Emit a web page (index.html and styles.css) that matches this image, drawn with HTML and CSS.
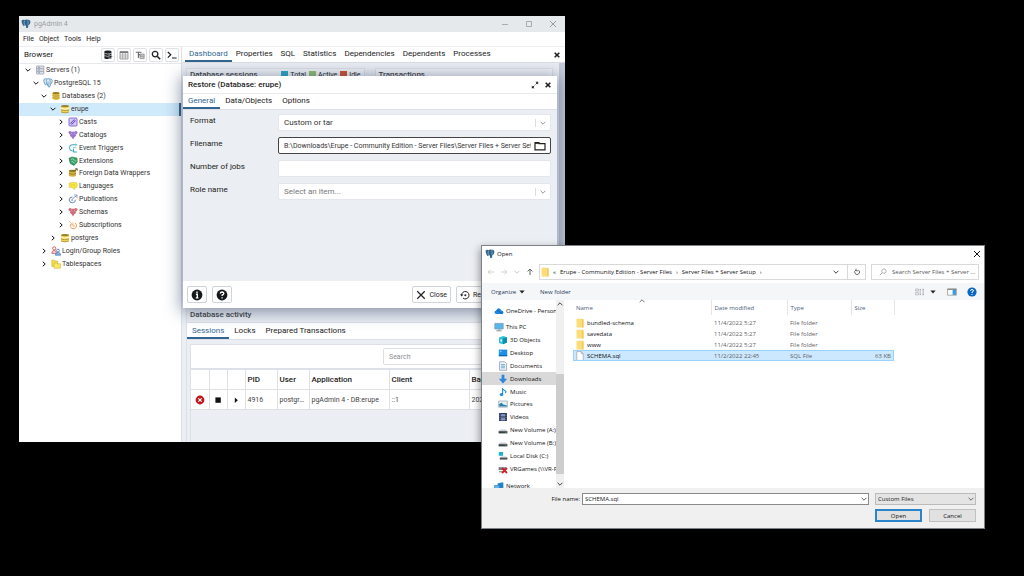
FILE: index.html
```html
<!DOCTYPE html>
<html lang="en">
<head>
    <meta charset="UTF-8">
    <meta name="viewport" content="width=device-width, initial-scale=1.0">
    <title>pgAdmin 4</title>
    <link rel="stylesheet" href="styles.css">
</head>
<body>
    <!-- icon sprite -->
    <svg class="sprite" width="0" height="0" aria-hidden="true">
        <symbol id="i-right" viewBox="0 0 8 8"><path d="M2.8 1.8 5.2 4 2.8 6.2" fill="none" stroke="currentColor"/></symbol>
        <symbol id="i-down" viewBox="0 0 8 8"><path d="M1.6 2.8 4 5.2 6.4 2.8" fill="none" stroke="currentColor"/></symbol>
        <symbol id="i-up" viewBox="0 0 8 8"><path d="M1.6 5.2 4 2.8 6.4 5.2" fill="none" stroke="currentColor"/></symbol>
        <symbol id="i-x" viewBox="0 0 8 8"><path d="M1 1 7 7M7 1 1 7" fill="none" stroke="currentColor"/></symbol>
        <symbol id="i-bx" viewBox="0 0 8 8"><path d="M1.7 1.7 6.3 6.3M6.3 1.7 1.7 6.3" fill="none" stroke="currentColor" stroke-width="1.6"/></symbol>
        <symbol id="i-min" viewBox="0 0 8 8"><path d="M1 4.5H7" stroke="currentColor" stroke-width=".8"/></symbol>
        <symbol id="i-max" viewBox="0 0 8 8"><path d="M1.5 1.5H6.5V6.5H1.5Z" fill="none" stroke="currentColor" stroke-width=".8"/></symbol>
        <symbol id="i-elephant" viewBox="0 0 10 10"><path d="M.6 1.6Q2 .2 3.8 1Q5 .3 6.6.8Q9 .4 9.4 2.4Q9.5 4.4 8 6H7.4L7 8.6Q6 9.8 5.2 8.8L4.8 6.2L3.4 6.6Q2.4 7.6 1.8 6Q.4 3.6.6 1.6Z" fill="#31648c"/><path d="M3.5 1.6Q2.8 3.6 3.4 6M6.6 1.4Q7.8 3 6.8 5.8" fill="none" stroke="#c4d8e6" stroke-width=".5"/></symbol>
        <symbol id="i-pg" viewBox="0 0 10 10"><path d="M.8 1.6Q2.2.3 3.9 1Q5 .4 6.6.9Q8.8.6 9.2 2.4Q9.3 4.4 8 6H7.4L7 8.6Q6 9.6 5.2 8.6L4.8 6.2L3.4 6.6Q2.4 7.4 1.9 6Q.6 3.6.8 1.6Z" fill="#e3f0f8" stroke="#4b8ab8" stroke-width=".8"/><path d="M3.6 1.4Q2.9 3.6 3.5 6M6.6 1.4Q7.8 3 6.8 5.8M5 3.4V8" fill="none" stroke="#4b8ab8" stroke-width=".7"/></symbol>
        <symbol id="i-server" viewBox="0 0 10 10"><path d="M1.6 1H8.8V9H1.6Z" fill="#dfe3ea" stroke="#9aa2b4" stroke-width=".8"/><path d="M1.6 3.7H8.8M1.6 6.3H8.8" stroke="#8f98a8" stroke-width=".8"/><path d="M3 2.4H5M3 5H5M3 7.7H5" stroke="#697387" stroke-width=".6"/></symbol>
        <symbol id="i-dbs" viewBox="0 0 10 10"><path d="M1.5 2V8Q5 10 8.5 8V2Z" fill="#e0bd45"/><ellipse cx="5" cy="2.1" rx="3.5" ry="1.2" fill="#9a7d1d"/><path d="M1.5 4.5Q5 6 8.5 4.5M1.5 6.6Q5 8.1 8.5 6.6" fill="none" stroke="#a88a24" stroke-width=".6"/></symbol>
        <symbol id="i-db" viewBox="0 0 10 10"><path d="M1 2V8Q5 10 9 8V2Z" fill="#f5d95f"/><ellipse cx="5" cy="2.1" rx="4" ry="1.2" fill="#9a8327"/><path d="M1 4.4Q5 5.8 9 4.4" fill="none" stroke="#fffbe0" stroke-width=".9"/><path d="M1 6Q5 7.6 9 6M1 8Q5 9.8 9 8" fill="none" stroke="#a88a24" stroke-width=".8"/></symbol>
        <symbol id="i-casts" viewBox="0 0 10 10"><rect x="1" y="1" width="8" height="8" rx="1" fill="#d8ccf6" stroke="#7a5fd0" stroke-width=".9"/><path d="M3 7 7 3" stroke="#6a4cc6" stroke-width="2.4"/><path d="M3.4 6.6 6.6 3.4" stroke="#e7dffb" stroke-width=".8"/></symbol>
        <symbol id="i-heart" viewBox="0 0 10 10"><circle cx="2.2" cy="2.6" r="1.7"/><circle cx="7.8" cy="2.6" r="1.7"/><circle cx="5" cy="3" r="1.6"/><path d="M1.4 4.6H8.6L6.6 6.8 5 9.4 3.4 6.8Z"/><circle cx="3.6" cy="5.4" r="1.4"/><circle cx="6.4" cy="5.4" r="1.4"/></symbol>
        <symbol id="i-trigger" viewBox="0 0 10 10"><path d="M8.6 1.8H4Q1.4 1.8 1.4 4.6Q1.4 8 4.6 8" fill="none" stroke="#36a6ba" stroke-width="1"/><path d="M7.2.8 9.2 1.8 7.4 3.2M4.8 4.5H8.6" fill="none" stroke="#76cbd8" stroke-width=".8"/><path d="M5.4 5.6 5.4 9 8.8 9" fill="none" stroke="#2688c7" stroke-width=".9"/></symbol>
        <symbol id="i-ext" viewBox="0 0 10 10"><path d="M1 2.4 4 1 9 2.2 9.2 6 6 9.4 2.4 7.4Z" fill="#3aa46b" stroke="#1d7446" stroke-width=".7"/><path d="M3 3.4Q5 2 6.2 3.8T8.4 5M3.4 5.6Q5 4.6 6.4 7.4" fill="none" stroke="#b9e6cb" stroke-width=".7"/></symbol>
        <symbol id="i-fdw" viewBox="0 0 10 10"><path d="M1 2.6V8Q4.4 9.6 8 8V2.6Z" fill="#d3b041"/><ellipse cx="4.5" cy="2.8" rx="3.5" ry="1.1" fill="#8f7420"/><path d="M1 5.6Q4.5 7 8 5.6" fill="none" stroke="#8f7420" stroke-width=".7"/><path d="M6.2 3 9.2.8M7.2.8H9.2V2.8" fill="none" stroke="#57480f" stroke-width=".8"/></symbol>
        <symbol id="i-lang" viewBox="0 0 10 10"><path d="M1.4 2Q5 .8 8.8 2Q9.6 4.6 8.6 6.4H6.6L6.8 8.6 4 6.6H1.6Q.6 4.4 1.4 2Z" fill="#fbe94a" stroke="#d3bd22" stroke-width=".6"/><path d="M2.6 3.4H7.4M2.6 4.8H7.4" stroke="#e0cb2d" stroke-width=".6"/></symbol>
        <symbol id="i-pub" viewBox="0 0 10 10"><path d="M4.4 3Q1.2 3 1.2 6Q1.4 9 4.6 8.8Q7.6 8.4 7.4 5.8" fill="none" stroke="#6a86bd" stroke-width="1"/><path d="M4 6.2Q4.4 3.8 8.6 1.8M6.2 1H9V3.8" fill="none" stroke="#7b95c8" stroke-width=".9"/><circle cx="4.2" cy="6.2" r="1.1" fill="#a9bce0"/></symbol>
        <symbol id="i-sub" viewBox="0 0 10 10"><path d="M3 3.8Q1.2 6.6 3.6 8.4Q6.4 9.8 8.2 7.4Q9.4 4.6 7.2 3" fill="none" stroke="#eba26c" stroke-width="1"/><path d="M1 1 5 5M5 2.2V5H2.2" fill="none" stroke="#f1b57f" stroke-width=".9"/><circle cx="5.8" cy="6" r="1.2" fill="#f6d0ad"/></symbol>
        <symbol id="i-roles" viewBox="0 0 10 10"><circle cx="3.2" cy="2.4" r="1.6" fill="#fff" stroke="#c6433f" stroke-width=".8"/><path d="M.8 7.4Q.8 4.4 3.2 4.4T5.4 7.4Z" fill="#f6d6d4" stroke="#c6433f" stroke-width=".7"/><circle cx="7" cy="4.6" r="1.4" fill="#fff" stroke="#3d73ba" stroke-width=".8"/><path d="M4.4 9.2Q4.6 6.4 7 6.4T9.6 9.2Z" fill="#8fb8e8" stroke="#3d73ba" stroke-width=".7"/></symbol>
        <symbol id="i-tbs" viewBox="0 0 10 10"><path d="M.8 1.2H3.4L4 2H6.6V7.4H.8Z" fill="#f5dc4e" stroke="#cfb12d" stroke-width=".6"/><path d="M3 4H5.6L6.2 4.8H9.4V9.2H3Z" fill="#fbe768" stroke="#cfb12d" stroke-width=".6"/></symbol>
        <symbol id="i-query" viewBox="0 0 10 10"><path d="M1.4 1.8V8.4Q5 9.8 8.4 8.4V1.8Z" fill="#1c2024"/><ellipse cx="4.9" cy="1.8" rx="3.5" ry="1.2" fill="#1c2024"/><path d="M1.4 3.4Q5 4.6 8.4 3.4M1.4 5.6Q5 6.8 5.6 6.2" fill="none" stroke="#fff" stroke-width=".6"/><path d="M6 4.6 9.6 6.8 6 9Z" fill="#1c2024" stroke="#fff" stroke-width=".5"/></symbol>
        <symbol id="i-grid" viewBox="0 0 10 10"><path d="M1 1.5H9V9H1Z" fill="#fff" stroke="#777" stroke-width=".7"/><path d="M1 2.4H9" stroke="#777" stroke-width="1.4"/><path d="M1 5H9M1 7H9M3.7 3V9M6.3 3V9" stroke="#888" stroke-width=".6"/></symbol>
        <symbol id="i-filter" viewBox="0 0 10 10"><path d="M.8 2.2H6.4M3.4 2.2V8M3.4 4.6H5" fill="none" stroke="#666" stroke-width="1.1"/><path d="M5 4H9.2V8.6H5Z" fill="#ccc" stroke="#777" stroke-width=".6"/><path d="M5 6.2H9.2" stroke="#777" stroke-width=".6"/></symbol>
        <symbol id="i-search" viewBox="0 0 10 10"><circle cx="4.1" cy="4.1" r="2.8" fill="none" stroke="currentColor" stroke-width="1.3"/><path d="M6.2 6.2 9.2 9.2" stroke="currentColor" stroke-width="1.6"/></symbol>
        <symbol id="i-term" viewBox="0 0 10 10"><path d="M.8 2 3.8 4.8.8 7.6M5 8H9.6" fill="none" stroke="#1c2024" stroke-width="1.2"/></symbol>
        <symbol id="i-expand" viewBox="0 0 8 8"><path d="M1.4 6.6 6.6 1.4" stroke="#222" stroke-width=".9" stroke-dasharray="2.8 1.7"/><path d="M4.4.8H7.2V3.6ZM.8 4.4V7.2H3.6Z" fill="#222"/></symbol>
        <symbol id="i-folder-o" viewBox="0 0 12 10"><path d="M1 1.6H5V2.6H11V8.8H1Z" fill="none" stroke="#222" stroke-width="1.2"/><path d="M1 2.2H5" stroke="#222" stroke-width="1.2"/></symbol>
        <symbol id="i-info" viewBox="0 0 12 12"><circle cx="6" cy="6" r="5.4" fill="#16191c"/><path d="M6 2.4V4M4.9 5.2H6.3V8.8M4.8 8.9H7.4" fill="none" stroke="#fff" stroke-width="1.4"/></symbol>
        <symbol id="i-help" viewBox="0 0 12 12"><circle cx="6" cy="6" r="5.4" fill="#16191c"/><path d="M4.2 4.6Q4.4 3 6.1 3Q7.9 3.1 7.8 4.6Q7.6 5.6 6.1 6.1V7.1M6.1 8.2V9.6" fill="none" stroke="#fff" stroke-width="1.3"/></symbol>
        <symbol id="i-restore" viewBox="0 0 10 10"><path d="M1.6 5.2A3.7 3.7 0 1 1 3 8.1" fill="none" stroke="#222" stroke-width="1"/><path d="M0 4.4H3.4L1.7 6.6Z" fill="#222"/><circle cx="5.3" cy="5.2" r="1" fill="#222"/></symbol>
        <symbol id="i-kill" viewBox="0 0 10 10"><circle cx="5" cy="5" r="4.4" fill="#c4161c"/><path d="M3.3 3.3 6.7 6.7M6.7 3.3 3.3 6.7" stroke="#fff" stroke-width="1.2"/></symbol>
        <symbol id="i-stop" viewBox="0 0 10 10"><path d="M2.4 2.4H7.8V7.8H2.4Z" fill="#111"/></symbol>
        <symbol id="i-play" viewBox="0 0 10 10"><path d="M3.8 2.4 6.8 5.2 3.8 8Z" fill="#111"/></symbol>
        <symbol id="i-arrow" viewBox="0 0 8 8"><path d="M7 4H1.2M3.4 1.6 1 4 3.4 6.4" fill="none" stroke="currentColor" stroke-width=".9"/></symbol>
        <symbol id="i-folder" viewBox="0 0 8 10"><path d="M.5.8H6L7.5 1.6V9.4H.5Z" fill="#fbdc76"/><path d="M6 .8V9.4H7.5V1.6Z" fill="#f0c957"/><path d="M.5 9.4V5L1.2 4.2V9.4Z" fill="#fff0b6"/></symbol>
        <symbol id="i-file" viewBox="0 0 8 10"><path d="M.8.6H5.2L7.2 2.6V9.4H.8Z" fill="#fff" stroke="#8d949b" stroke-width=".6"/><path d="M5.2.6V2.6H7.2" fill="none" stroke="#8d949b" stroke-width=".6"/></symbol>
        <symbol id="i-refresh" viewBox="0 0 8 8"><path d="M5.6 2.2A2.4 2.4 0 1 1 3 2" fill="none" stroke="#444" stroke-width=".8"/><path d="M3 .6V2.8H5.2" fill="none" stroke="#444" stroke-width=".7"/></symbol>
        <symbol id="i-loupe" viewBox="0 0 8 8"><circle cx="4.9" cy="3.1" r="2.2" fill="none" stroke="#999" stroke-width=".7"/><path d="M3.3 4.7.8 7.2" stroke="#999" stroke-width=".8"/></symbol>
        <symbol id="i-cloud" viewBox="0 0 10 10"><path d="M2.4 8Q.4 7.8.5 6Q.8 4.4 2.4 4.4Q3.2 2 5.4 2.4Q7 2.8 7.2 4.4Q9.5 4.6 9.5 6.4Q9.4 8 7.8 8Z" fill="#1a86e0"/><path d="M2.4 4.4Q4.6 4.4 6 6.2L8.6 7.8" fill="none" stroke="#0a5cb4" stroke-width=".8"/></symbol>
        <symbol id="i-pc" viewBox="0 0 10 10"><path d="M.8 1.4H9.2V7H.8Z" fill="#58b8ee" stroke="#7f97a8" stroke-width=".7"/><path d="M2.4 8.8H7.8M5 7V8.6" stroke="#8795a0" stroke-width="1"/></symbol>
        <symbol id="i-cube" viewBox="0 0 10 10"><path d="M1 2.6 5.4 1 9 2.2V7.4L5 9.2 1 8Z" fill="#2cc0d4"/><path d="M5 3.6 9 2.2V7.4L5 9.2Z" fill="#0c8fae"/><path d="M2.4 4.2 4 4.6V6.8L2.4 6.4Z" fill="#d8f8fb"/></symbol>
        <symbol id="i-desk" viewBox="0 0 10 10"><path d="M.8 1.6H9.2V8.2H.8Z" fill="#1c8fe6"/><path d="M.8 7.2H9.2V8.2H.8Z" fill="#0b5ca8"/><path d="M1.8 2.8H3.4V4.2H1.8Z" fill="#8fd0ff"/></symbol>
        <symbol id="i-docs" viewBox="0 0 10 10"><path d="M1.6.8H6.8L8.6 2.6V9.2H1.6Z" fill="#f4f8fb" stroke="#7b8e9c" stroke-width=".7"/><path d="M3 3.6H7M3 5.2H7M3 6.8H7" stroke="#4796cf" stroke-width=".8"/></symbol>
        <symbol id="i-dl" viewBox="0 0 10 10"><path d="M3.6.8H6.4V4.8H9.2L5 9.4.8 4.8H3.6Z" fill="#2f86dc"/></symbol>
        <symbol id="i-music" viewBox="0 0 10 10"><path d="M4.6 7.4V1Q5 3 8 4.4Q7.8 5.4 7.2 6" fill="none" stroke="#1c8fe6" stroke-width="1.1"/><ellipse cx="3.5" cy="7.6" rx="1.8" ry="1.5" fill="#1c8fe6"/></symbol>
        <symbol id="i-pics" viewBox="0 0 10 10"><path d="M.6 2H9.4V8.2H.6Z" fill="#e3eff6" stroke="#8799a5" stroke-width=".6"/><path d="M1.2 7.6V5L3.6 3.8 5.6 5.8 8.8 6.2V7.6Z" fill="#2d7fae"/></symbol>
        <symbol id="i-video" viewBox="0 0 10 10"><path d="M1 1H9V9H1Z" fill="#2c3550"/><path d="M3 2H7V4.6H3ZM3 5.6H7V8.4H3Z" fill="#7c92c4"/><path d="M2 1.4V9M8 1.4V9" stroke="#c8cedb" stroke-width=".6" stroke-dasharray="1 .8"/></symbol>
        <symbol id="i-drive" viewBox="0 0 10 10"><path d="M1.8 4.6H8.2L9.4 6.4H.6Z" fill="#c9cdd0"/><path d="M.6 6.2H9.4V8.4H.6Z" fill="#3a3f43"/><path d="M7.4 7.3H8.4" stroke="#6be86b" stroke-width=".7"/></symbol>
        <symbol id="i-cdrive" viewBox="0 0 10 10"><path d="M.8 1H5V4.8H.8Z" fill="#18b3cc"/><path d="M2.8 5.4H8.4L9.4 6.8H1.8Z" fill="#c9cdd0"/><path d="M1.8 6.6H9.4V8.6H1.8Z" fill="#4c5256"/></symbol>
        <symbol id="i-vr" viewBox="0 0 10 10"><path d="M.6 3.2H8.2V6H.6Z" fill="#777d82"/><path d="M1 7.8H6" stroke="#3f9a4c" stroke-width="1"/><path d="M4 4 9 9M9 4 4 9" stroke="#d3212b" stroke-width="1.8"/></symbol>
        <symbol id="i-net" viewBox="0 0 10 10"><path d="M3.6 2.4 8.4 1.2 9.4 2V7.6L4.6 8.6Z" fill="#2382cc"/><path d="M.6 4.4H5.6V8.6H.6Z" fill="#5cb5ee" stroke="#2473ac" stroke-width=".6"/></symbol>
        <symbol id="i-view" viewBox="0 0 10 8"><path d="M.6 1H3.4V3H.6ZM.6 4.6H3.4V6.8H.6Z" fill="none" stroke="#9aa0a6" stroke-width=".6"/><path d="M4.6 1.4H6M7.4 1.4H9M4.6 3H6M7.4 3H9M4.6 5H6M7.4 5H9M4.6 6.6H6M7.4 6.6H9" stroke="#7b828a" stroke-width=".7"/></symbol>
        <symbol id="i-pane" viewBox="0 0 10 8"><path d="M.6.8H9.4V7.2H.6Z" fill="#fff" stroke="#777" stroke-width=".6"/><path d="M.6 1.4H9.4" stroke="#777" stroke-width=".9"/><path d="M5.6 1.8H9V6.9H5.6Z" fill="#3c9be8"/></symbol>
        <symbol id="i-qblue" viewBox="0 0 10 10"><circle cx="5" cy="5" r="4.6" fill="#0b66c2"/><path d="M3.5 3.9Q3.6 2.5 5 2.5Q6.6 2.6 6.5 3.9Q6.3 4.8 5 5.2V6M5 7V8" fill="none" stroke="#fff" stroke-width="1"/></symbol>
        <symbol id="i-tri" viewBox="0 0 8 8"><path d="M1.4 2.6H6.6L4 5.6Z" fill="#222"/></symbol>
    </svg>

    <main class="desktop">
        <section class="window pgadmin">
            <header class="titlebar">
                <svg class="ico"><use href="#i-elephant"/></svg>
                <h1>pgAdmin 4</h1>
                <div class="win-buttons">
                    <button aria-label="Minimize"><svg class="ico-s"><use href="#i-min"/></svg></button>
                    <button aria-label="Maximize"><svg class="ico-s"><use href="#i-max"/></svg></button>
                    <button aria-label="Close window"><svg class="ico-s"><use href="#i-x"/></svg></button>
                </div>
            </header>
            <nav class="menubar">
                <button>File</button>
                <button>Object</button>
                <button>Tools</button>
                <button>Help</button>
            </nav>

            <div class="panes">
                <aside class="browser">
                    <div class="browser-head">
                        <h2>Browser</h2>
                        <button aria-label="Query tool"><svg class="ico"><use href="#i-query"/></svg></button>
                        <button aria-label="View data"><svg class="ico"><use href="#i-grid"/></svg></button>
                        <button aria-label="Filtered rows"><svg class="ico"><use href="#i-filter"/></svg></button>
                        <button aria-label="Search objects"><svg class="ico"><use href="#i-search"/></svg></button>
                        <button aria-label="PSQL tool"><svg class="ico"><use href="#i-term"/></svg></button>
                    </div>
                    <ul class="tree">
                        <li class="lv0"><button aria-label="Collapse"><svg class="ico-s"><use href="#i-down"/></svg></button><svg class="ico"><use href="#i-server"/></svg>Servers (1)</li>
                        <li class="lv1"><button aria-label="Collapse"><svg class="ico-s"><use href="#i-down"/></svg></button><svg class="ico"><use href="#i-pg"/></svg>PostgreSQL 15</li>
                        <li class="lv2"><button aria-label="Collapse"><svg class="ico-s"><use href="#i-down"/></svg></button><svg class="ico"><use href="#i-dbs"/></svg>Databases (2)</li>
                        <li class="lv3 selected"><button aria-label="Collapse"><svg class="ico-s"><use href="#i-down"/></svg></button><svg class="ico"><use href="#i-db"/></svg>erupe</li>
                        <li class="lv4"><button aria-label="Expand"><svg class="ico-s"><use href="#i-right"/></svg></button><svg class="ico"><use href="#i-casts"/></svg>Casts</li>
                        <li class="lv4"><button aria-label="Expand"><svg class="ico-s"><use href="#i-right"/></svg></button><svg class="ico violet"><use href="#i-heart"/></svg>Catalogs</li>
                        <li class="lv4"><button aria-label="Expand"><svg class="ico-s"><use href="#i-right"/></svg></button><svg class="ico"><use href="#i-trigger"/></svg>Event Triggers</li>
                        <li class="lv4"><button aria-label="Expand"><svg class="ico-s"><use href="#i-right"/></svg></button><svg class="ico"><use href="#i-ext"/></svg>Extensions</li>
                        <li class="lv4"><button aria-label="Expand"><svg class="ico-s"><use href="#i-right"/></svg></button><svg class="ico"><use href="#i-fdw"/></svg>Foreign Data Wrappers</li>
                        <li class="lv4"><button aria-label="Expand"><svg class="ico-s"><use href="#i-right"/></svg></button><svg class="ico"><use href="#i-lang"/></svg>Languages</li>
                        <li class="lv4"><button aria-label="Expand"><svg class="ico-s"><use href="#i-right"/></svg></button><svg class="ico"><use href="#i-pub"/></svg>Publications</li>
                        <li class="lv4"><button aria-label="Expand"><svg class="ico-s"><use href="#i-right"/></svg></button><svg class="ico rose"><use href="#i-heart"/></svg>Schemas</li>
                        <li class="lv4"><button aria-label="Expand"><svg class="ico-s"><use href="#i-right"/></svg></button><svg class="ico"><use href="#i-sub"/></svg>Subscriptions</li>
                        <li class="lv3"><button aria-label="Expand"><svg class="ico-s"><use href="#i-right"/></svg></button><svg class="ico"><use href="#i-db"/></svg>postgres</li>
                        <li class="lv2"><button aria-label="Expand"><svg class="ico-s"><use href="#i-right"/></svg></button><svg class="ico"><use href="#i-roles"/></svg>Login/Group Roles</li>
                        <li class="lv2"><button aria-label="Expand"><svg class="ico-s"><use href="#i-right"/></svg></button><svg class="ico"><use href="#i-tbs"/></svg>Tablespaces</li>
                    </ul>
                </aside>

                <div class="workspace">
                    <nav class="main-tabs">
                        <button class="active">Dashboard</button>
                        <button>Properties</button>
                        <button>SQL</button>
                        <button>Statistics</button>
                        <button>Dependencies</button>
                        <button>Dependents</button>
                        <button>Processes</button>
                        <button class="close-tab" aria-label="Close panel"><svg class="ico-s"><use href="#i-bx"/></svg></button>
                    </nav>
                    <div class="dash-scroll">
                        <div class="dashboard">
                            <div class="charts">
                                <div class="card">
                                    <h3>Database sessions</h3>
                                    <span class="key total">Total</span>
                                    <span class="key act">Active</span>
                                    <span class="key idle">Idle</span>
                                </div>
                                <div class="card"><h3>Transactions</h3></div>
                            </div>
                            <section class="activity">
                                <h3>Database activity</h3>
                                <nav class="sub-tabs">
                                    <button class="active">Sessions</button>
                                    <button>Locks</button>
                                    <button>Prepared Transactions</button>
                                </nav>
                                <div class="sessions">
                                    <div class="search-row"><input type="text" placeholder="Search" aria-label="Search"></div>
                                    <table>
                                        <colgroup>
                                            <col class="c-ico"><col class="c-ico"><col class="c-ico"><col class="c-sm"><col class="c-sm"><col class="c-lg"><col class="c-lg"><col>
                                        </colgroup>
                                        <thead>
                                            <tr><th></th><th></th><th></th><th>PID</th><th>User</th><th>Application</th><th>Client</th><th>Backend start</th></tr>
                                        </thead>
                                        <tbody>
                                            <tr>
                                                <td><svg class="ico"><use href="#i-kill"/></svg></td>
                                                <td><svg class="ico"><use href="#i-stop"/></svg></td>
                                                <td><svg class="ico"><use href="#i-play"/></svg></td>
                                                <td>4916</td>
                                                <td>postgres</td>
                                                <td>pgAdmin 4 - DB:erupe</td>
                                                <td>::1</td>
                                                <td>2022</td>
                                            </tr>
                                        </tbody>
                                    </table>
                                </div>
                            </section>
                        </div>
                        <div class="scroll-track"></div>
                    </div>
                </div>
            </div>

            <form class="restore">
                <header>
                    <h2>Restore (Database: erupe)</h2>
                    <button type="button" aria-label="Maximize dialog"><svg class="ico-s"><use href="#i-expand"/></svg></button>
                    <button type="button" aria-label="Close dialog"><svg class="ico-s"><use href="#i-bx"/></svg></button>
                </header>
                <nav class="sub-tabs">
                    <button type="button" class="active">General</button>
                    <button type="button">Data/Objects</button>
                    <button type="button">Options</button>
                </nav>
                <div class="fields">
                    <label for="format">Format</label>
                    <div class="control">
                        <select id="format"><option>Custom or tar</option></select>
                        <svg class="caret"><use href="#i-down"/></svg>
                    </div>
                    <label for="filename">Filename</label>
                    <div class="control focus">
                        <input type="text" id="filename" value="B:\Downloads\Erupe - Community Edition - Server Files\Server Files + Server Setup">
                        <button type="button" aria-label="Browse"><svg class="ico-w"><use href="#i-folder-o"/></svg></button>
                    </div>
                    <label for="jobs">Number of jobs</label>
                    <div class="control"><input type="text" id="jobs"></div>
                    <label for="role">Role name</label>
                    <div class="control">
                        <select id="role" class="empty"><option>Select an item...</option></select>
                        <svg class="caret"><use href="#i-down"/></svg>
                    </div>
                </div>
                <footer>
                    <button type="button" aria-label="Info"><svg class="ico-l"><use href="#i-info"/></svg></button>
                    <button type="button" aria-label="Help"><svg class="ico-l"><use href="#i-help"/></svg></button>
                    <button type="button" class="push"><svg class="ico"><use href="#i-x"/></svg>Close</button>
                    <button type="button" class="go"><svg class="ico"><use href="#i-restore"/></svg>Restore</button>
                </footer>
            </form>
        </section>

        <section class="window open-dialog">
            <header class="dialog-title">
                <svg class="ico"><use href="#i-elephant"/></svg>
                <h1>Open</h1>
                <button aria-label="Close"><svg class="ico-s"><use href="#i-x"/></svg></button>
            </header>
            <div class="address-row">
                <button class="off" aria-label="Back"><svg class="ico-s"><use href="#i-arrow"/></svg></button>
                <button class="off flip" aria-label="Forward"><svg class="ico-s"><use href="#i-arrow"/></svg></button>
                <button class="off" aria-label="Recent"><svg class="ico-s"><use href="#i-down"/></svg></button>
                <button class="turn" aria-label="Up"><svg class="ico-s"><use href="#i-arrow"/></svg></button>
                <div class="address">
                    <svg class="ico-f"><use href="#i-folder"/></svg>
                    <span>«</span>
                    <a href="#">Erupe - Community Edition - Server Files</a>
                    <span>›</span>
                    <a href="#">Server Files + Server Setup</a>
                    <span>›</span>
                    <button class="history" aria-label="Previous locations"><svg class="ico-s"><use href="#i-down"/></svg></button>
                    <button class="refresh" aria-label="Refresh"><svg class="ico-s"><use href="#i-refresh"/></svg></button>
                </div>
                <label class="find">
                    <svg class="ico-s"><use href="#i-loupe"/></svg>
                    <input type="text" placeholder="Search Server Files + Server Setup" aria-label="Search folder">
                </label>
            </div>
            <div class="commands">
                <button>Organize<svg class="ico-s"><use href="#i-tri"/></svg></button>
                <button>New folder</button>
                <button class="push" aria-label="Change view"><svg class="ico"><use href="#i-view"/></svg><svg class="ico-s"><use href="#i-tri"/></svg></button>
                <button aria-label="Preview pane"><svg class="ico"><use href="#i-pane"/></svg></button>
                <button aria-label="Get help"><svg class="ico"><use href="#i-qblue"/></svg></button>
            </div>
            <div class="explorer">
                <nav class="places">
                    <a href="#"><svg class="ico"><use href="#i-cloud"/></svg>OneDrive - Personal</a>
                    <div class="this-pc">
                        <a href="#"><svg class="ico"><use href="#i-pc"/></svg>This PC</a>
                        <a href="#" class="sub"><svg class="ico"><use href="#i-cube"/></svg>3D Objects</a>
                        <a href="#" class="sub"><svg class="ico"><use href="#i-desk"/></svg>Desktop</a>
                        <a href="#" class="sub"><svg class="ico"><use href="#i-docs"/></svg>Documents</a>
                        <a href="#" class="sub current"><svg class="ico"><use href="#i-dl"/></svg>Downloads</a>
                        <a href="#" class="sub"><svg class="ico"><use href="#i-music"/></svg>Music</a>
                        <a href="#" class="sub"><svg class="ico"><use href="#i-pics"/></svg>Pictures</a>
                        <a href="#" class="sub"><svg class="ico"><use href="#i-video"/></svg>Videos</a>
                        <a href="#" class="sub"><svg class="ico"><use href="#i-drive"/></svg>New Volume (A:)</a>
                        <a href="#" class="sub"><svg class="ico"><use href="#i-drive"/></svg>New Volume (B:)</a>
                        <a href="#" class="sub"><svg class="ico"><use href="#i-cdrive"/></svg>Local Disk (C:)</a>
                        <a href="#" class="sub"><svg class="ico"><use href="#i-vr"/></svg>VRGames (\\VR-PC)</a>
                    </div>
                    <a href="#"><svg class="ico"><use href="#i-net"/></svg>Network</a>
                </nav>
                <div class="places-scroll">
                    <svg class="ico-s"><use href="#i-up"/></svg>
                    <div class="thumb"></div>
                    <svg class="ico-s"><use href="#i-down"/></svg>
                </div>
                <div class="files">
                    <svg class="ico-s sort"><use href="#i-up"/></svg>
                    <table>
                        <colgroup><col class="f-name"><col class="f-date"><col class="f-type"><col class="f-size"></colgroup>
                        <thead>
                            <tr><th>Name</th><th>Date modified</th><th>Type</th><th>Size</th></tr>
                        </thead>
                        <tbody>
                            <tr><td><svg class="ico-f"><use href="#i-folder"/></svg>bundled-schema</td><td>11/4/2022 5:27</td><td>File folder</td><td></td></tr>
                            <tr><td><svg class="ico-f"><use href="#i-folder"/></svg>savedata</td><td>11/4/2022 5:27</td><td>File folder</td><td></td></tr>
                            <tr><td><svg class="ico-f"><use href="#i-folder"/></svg>www</td><td>11/4/2022 5:27</td><td>File folder</td><td></td></tr>
                            <tr class="selected"><td><svg class="ico-f"><use href="#i-file"/></svg>SCHEMA.sql</td><td>11/2/2022 22:45</td><td>SQL File</td><td>63 KB</td></tr>
                        </tbody>
                    </table>
                </div>
            </div>
            <footer class="dialog-foot">
                <div class="name-row">
                    <label for="fname">File name:</label>
                    <div class="combo">
                        <input type="text" id="fname" value="SCHEMA.sql">
                        <svg class="ico-s"><use href="#i-down"/></svg>
                    </div>
                    <div class="combo filter">
                        <select aria-label="File type"><option>Custom Files</option></select>
                        <svg class="ico-s"><use href="#i-down"/></svg>
                    </div>
                </div>
                <div class="action-row">
                    <button class="default">Open</button>
                    <button>Cancel</button>
                </div>
            </footer>
        </section>
    </main>
</body>
</html>
```

FILE: styles.css
```css
:root {
    --blue: #326690;
    --pane: #ebeef3;
    --line: #dde0e6;
    --text: #222;
}

* {
    margin: 0;
    padding: 0;
    box-sizing: border-box;
}

body {
    background: #000;
    color: var(--text);
    font-family: Roboto, sans-serif;
    font-size: 7px;
    line-height: 10px;
}

button, input, select {
    font: inherit;
    color: inherit;
    background: none;
    border: none;
    outline: none;
    appearance: none;
    min-width: 0;
}

button {
    display: flex;
    align-items: center;
    justify-content: center;
    flex-shrink: 0;
}

h1, h2, h3 {
    font-size: inherit;
    font-weight: 400;
}

a {
    color: inherit;
    text-decoration: none;
}

ul {
    list-style: none;
}

table {
    border-collapse: collapse;
    table-layout: fixed;
    width: 100%;
}

svg {
    flex-shrink: 0;
    display: block;
}

.sprite { position: absolute; }
.ico { width: 10px; height: 10px; }
.ico-s { width: 8px; height: 8px; }
.ico-w { width: 12px; height: 10px; }
.ico-l { width: 12px; height: 12px; }
.ico-f { width: 8px; height: 10px; }

.desktop {
    position: relative;
    min-height: 100vh;
    overflow: hidden;
}

.window {
    position: absolute;
    display: flex;
    flex-direction: column;
    overflow: hidden;
    background: #fff;
}

/* ---------- pgAdmin window ---------- */

.pgadmin {
    left: 19px;
    top: 16px;
    width: 546px;
    height: 426px;
}

.titlebar {
    display: flex;
    align-items: center;
    gap: 3px;
    height: 16px;
    padding-left: 2px;
    background: #e6e9ec;
    color: #9a9da1;
}

.win-buttons {
    display: flex;
    gap: 16px;
    margin-left: auto;
    padding-right: 8px;
}

.menubar {
    display: flex;
    gap: 5px;
    height: 15px;
    padding-left: 4px;
    border-bottom: 1px solid #eceef1;
}

.panes {
    display: flex;
    flex: 1;
    min-height: 0;
}

.browser {
    width: 162px;
    flex-shrink: 0;
}

.browser-head {
    display: flex;
    align-items: center;
    gap: 2px;
    height: 17px;
    padding: 0 2px 0 5px;
    border-bottom: 1px solid #e6e8ec;
}

.browser-head h2 {
    flex: 1;
    font-size: 8px;
}

.browser-head button {
    width: 14px;
    height: 14px;
    border: 1px solid #dfe1e5;
    border-radius: 2px;
}

.tree {
    display: grid;
    grid-auto-rows: 1fr;
    height: 206px;
}

.tree li {
    display: flex;
    align-items: center;
    color: #333;
    white-space: nowrap;
}

.tree .ico {
    margin: 0 1px 0 3px;
}

.tree button { color: #111; }
.tree .selected {
    background: #cfeafb;
    border-right: 2px solid var(--blue);
}

.lv0 { padding-left: 5px; }
.lv1 { padding-left: 13px; }
.lv2 { padding-left: 21px; }
.lv3 { padding-left: 30px; }
.lv4 { padding-left: 38px; }

.violet { fill: #9a74cf; }
.rose { fill: #cf6f7c; }

.workspace {
    display: flex;
    flex-direction: column;
    flex: 1;
    min-width: 0;
    border-left: 1px solid var(--line);
}

.main-tabs {
    display: flex;
    height: 16px;
    padding: 0 4px 0 3px;
    border-bottom: 1px solid var(--line);
    font-size: 8px;
}

.main-tabs button {
    padding: 1px 4px 0;
    border-bottom: 2px solid transparent;
}

.main-tabs .active, .sub-tabs .active {
    color: var(--blue);
    border-color: var(--blue);
}

.main-tabs .close-tab {
    margin-left: auto;
    padding: 2px 0 0;
}

.dash-scroll {
    display: flex;
    flex: 1;
    min-height: 0;
    background: var(--pane);
}

.scroll-track {
    width: 6px;
    background: #c5cbd8;
}

.dashboard {
    display: flex;
    flex-direction: column;
    flex: 1;
    min-width: 0;
    padding: 5px 6px 0 4px;
}

.charts {
    display: flex;
    gap: 10px;
    height: 238px;
}

.card {
    display: flex;
    align-items: center;
    flex: 1;
    gap: 3px;
    height: 14px;
    padding: 0 3px;
    background: #f3f5f8;
    border: 1px solid var(--line);
}

.card h3, .activity h3 {
    font-size: 8px;
    font-weight: 500;
    color: #444;
}

.card h3 { flex: 1; }

.key::before {
    content: "";
    display: inline-block;
    width: 7px;
    height: 7px;
    margin-right: 2px;
    vertical-align: -1px;
}

.total::before { background: #2da9c9; }
.act::before { background: #93c274; }
.idle::before { background: #d2562f; }

.activity {
    display: flex;
    flex-direction: column;
    flex: 1;
    border-left: 1px solid var(--line);
}

.activity h3 {
    height: 17px;
    padding: 4px 3px 0;
    border-bottom: 1px solid var(--line);
}

.sub-tabs {
    display: flex;
    height: 17px;
    background: #fff;
    border-bottom: 1px solid var(--line);
    font-size: 8px;
}

.sub-tabs button {
    padding: 1px 5px 0;
    border-bottom: 2px solid transparent;
}

.sessions {
    flex: 1;
    margin: 4px 0 0 3px;
    border-left: 1px solid var(--line);
}

.search-row {
    display: flex;
    justify-content: flex-end;
    height: 25px;
    padding: 3px 4px;
    background: #fff;
    border: 1px solid var(--line);
    border-left: none;
}

.search-row input {
    width: 165px;
    padding: 0 5px;
    border: 1px solid #dcdfe4;
    border-radius: 2px;
}

::placeholder { color: #8d9196; opacity: 1; }

.sessions th, .sessions td {
    height: 20px;
    padding: 0 2px;
    background: #fff;
    border: 1px solid var(--line);
    border-left: none;
    text-align: left;
    white-space: nowrap;
    overflow: hidden;
    text-overflow: ellipsis;
}

.sessions th {
    font-size: 8px;
    font-weight: 500;
}

.sessions td { color: #444; }
.sessions td .ico { margin: 0 auto; }
.sessions .c-ico { width: 18px; }
.c-sm { width: 32px; }
.c-lg { width: 80px; }

/* restore dialog floats over the dashboard */

.restore {
    position: absolute;
    left: 164px;
    top: 60px;
    width: 374px;
    height: 232px;
    display: flex;
    flex-direction: column;
    background: var(--pane);
    border-radius: 2px;
    box-shadow: 0 2px 16px 2px rgba(30, 50, 90, .5);
}

.restore header {
    display: flex;
    align-items: center;
    gap: 5px;
    height: 18px;
    padding: 0 5px;
    background: #fff;
    border-bottom: 1px solid #e8eaee;
}

.restore header h2 {
    flex: 1;
    font-size: 8px;
    font-weight: 500;
}

.restore .sub-tabs { height: 16px; }

.fields {
    display: grid;
    grid-template-columns: 82px 1fr;
    grid-auto-rows: 17px;
    row-gap: 6px;
    column-gap: 6px;
    flex: 1;
    padding: 4px 6px 0 7px;
}

.fields label {
    padding-top: 2px;
    font-size: 8px;
}

.control {
    display: flex;
    align-items: center;
    background: #fff;
    border: 1px solid #e3e6eb;
    border-radius: 2px;
}

.control input, .control select {
    flex: 1;
    height: 100%;
    padding-left: 5px;
    color: #333;
}

.control select { font-size: 8px; }

.control.focus {
    border-color: #444;
    padding-right: 4px;
}

.control.focus button { padding-left: 3px; }
.control .empty { color: #777; }

.caret {
    width: 15px;
    height: 8px;
    padding: 0 3px;
    border-left: 1px solid #ddd;
    color: #999;
}

.restore footer {
    display: flex;
    align-items: center;
    gap: 5px;
    height: 27px;
    padding: 0 4px;
    background: #fff;
}

.restore footer button {
    gap: 3px;
    min-width: 20px;
    height: 17px;
    padding: 0 3px;
    border: 1px solid #cfd3da;
    border-radius: 2px;
}

.push { margin-left: auto; }
.restore .go { width: 97px; justify-content: flex-start; }

/* ---------- file open dialog ---------- */

.open-dialog {
    left: 481px;
    top: 245px;
    width: 504px;
    height: 284px;
    border: 1px solid #7c8288;
    box-shadow: -1px 3px 8px rgba(0, 0, 0, .4);
    font-family: "Open Sans", sans-serif;
    font-size: 6px;
    line-height: 8px;
    color: #111;
}

.dialog-title {
    display: flex;
    align-items: center;
    gap: 2px;
    height: 15px;
    padding: 0 3px;
}

.dialog-title h1 { flex: 1; }

.address-row {
    display: flex;
    align-items: center;
    gap: 5px;
    height: 22px;
    padding: 0 5px;
}

.address-row > button { color: #555; }
.address-row > .off { color: #ccc; }
.flip { transform: scaleX(-1); }
.turn { transform: rotate(90deg); }

.address {
    display: flex;
    align-items: center;
    gap: 4px;
    flex: 1;
    height: 16px;
    padding-left: 1px;
    border: 1px solid #d9d9d9;
    white-space: nowrap;
}

.history {
    width: 14px;
    margin-left: auto;
    color: #444;
}

.refresh {
    width: 18px;
    height: 14px;
    border-left: 1px solid #d9d9d9;
}

.find {
    display: flex;
    align-items: center;
    gap: 5px;
    width: 108px;
    height: 16px;
    padding-left: 7px;
    border: 1px solid #d9d9d9;
}

.find input {
    flex: 1;
    text-overflow: ellipsis;
}

.find ::placeholder { color: #555; }

.commands {
    display: flex;
    align-items: center;
    gap: 14px;
    height: 17px;
    padding: 0 7px 0 9px;
    background: #f5f6f7;
    color: #1e395b;
}

.commands button { gap: 2px; }
.commands .ico + .ico-s { margin-left: 2px; }
.commands .push { margin-left: auto; }
.commands .push ~ button { margin-left: -4px; }

.explorer {
    display: flex;
    flex: 1;
    min-height: 0;
}

.places {
    width: 74px;
    padding-top: 4px;
    overflow: hidden;
    white-space: nowrap;
}

.places a {
    display: flex;
    align-items: center;
    gap: 2px;
    height: 13px;
    padding-left: 12px;
}

.this-pc {
    display: grid;
    grid-auto-rows: 1fr;
    height: 154px;
    margin: 4px 0;
}

.this-pc a { height: auto; }
.places .sub { padding-left: 16px; }
.places .current { background: #d9d9d9; }

.places-scroll {
    display: flex;
    flex-direction: column;
    align-items: center;
    width: 8px;
    background: #f0f0f0;
    color: #444;
}

.thumb {
    width: 100%;
    height: 100px;
    margin: auto 0 6px;
    background: #cdcdcd;
}

.files {
    position: relative;
    flex: 1;
    padding-left: 9px;
}

.files table { width: 321px; }

.sort {
    position: absolute;
    left: 74px;
    top: -3px;
    color: #777;
}

.files th {
    height: 15px;
    padding: 0 3px;
    border-right: 1px solid #e5e5e5;
    font-weight: 400;
    text-align: left;
    color: #4c607a;
}

.files tbody::before {
    content: "";
    display: block;
    height: 2px;
}

.files td {
    height: 11px;
    padding: 0 3px;
    color: #5f5f5f;
    white-space: nowrap;
}

.files td:first-child { color: #111; }
.files td:last-child { text-align: right; }

.files td .ico-f {
    display: inline-block;
    margin-right: 3px;
    vertical-align: middle;
}

.files .selected {
    background: #cce8ff;
    outline: 1px solid #99d1ff;
    outline-offset: -1px;
}

.f-name { width: 138px; }
.f-date { width: 76px; }
.f-type { width: 64px; }
.f-size { width: 43px; }

.dialog-foot {
    height: 40px;
    padding: 5px 8px 0;
    background: #f0f0f0;
}

.name-row {
    display: flex;
    align-items: center;
    gap: 6px;
}

.name-row label {
    width: 90px;
    margin-right: -4px;
    text-align: right;
}

.combo {
    display: flex;
    align-items: center;
    flex: 1;
    height: 12px;
    background: #fff;
    border: 1px solid #8a8a8a;
    color: #222;
}

.combo svg { color: #666; }

.combo input, .combo select {
    flex: 1;
    padding-left: 2px;
}

.combo.filter {
    flex: none;
    width: 101px;
    background: #e4e4e4;
    border-color: #bbb;
}

.action-row {
    display: flex;
    justify-content: flex-end;
    gap: 7px;
    padding-top: 4px;
}

.action-row button {
    width: 47px;
    height: 13px;
    background: #e1e1e1;
    border: 1px solid #c0c0c0;
}

.action-row .default { border: 2px solid #2b83c9; }
```
